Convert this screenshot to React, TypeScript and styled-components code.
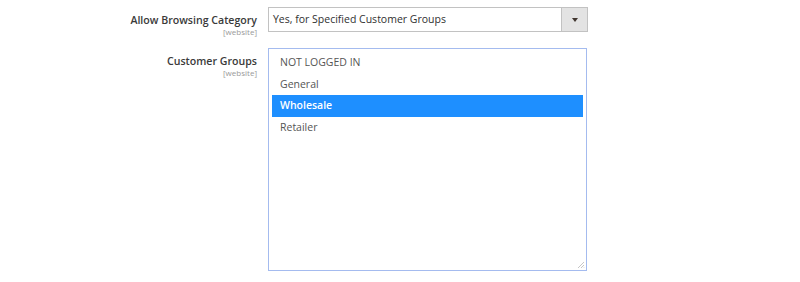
import React, {useState} from 'react';
import styled, {createGlobalStyle} from 'styled-components';

const GlobalStyle = createGlobalStyle`
  body {
    margin: 0;
    background: #fff;
    font-family: "Open Sans", "Liberation Sans", sans-serif;
    color: #303030;
  }
`;

const groups = ['NOT LOGGED IN', 'General', 'Wholesale', 'Retailer'];

export default function App() {
  const [selected, setSelected] = useState('Wholesale');

  return (
      <>
        <GlobalStyle/>
        <Fieldset>
          <Field>
            <Label>
              <span>Allow Browsing Category</span>
              <Scope>[website]</Scope>
            </Label>
            <Select>
              <SelectValue>Yes, for Specified Customer Groups</SelectValue>
              <Arrow/>
            </Select>
          </Field>
          <Field>
            <Label>
              <span>Customer Groups</span>
              <Scope>[website]</Scope>
            </Label>
            <ListBox role="listbox">
              {groups.map(name => (
                  <Option key={name} $active={name === selected} onClick={() => setSelected(name)}>
                    {name}
                  </Option>
              ))}
              <Grip viewBox="0 0 8 8">
                <path d="M7 1 L1 7 M7 4 L4 7 M7 6.5 L6.5 7" stroke="#b8b8b8" strokeWidth="0.8"/>
              </Grip>
            </ListBox>
          </Field>
        </Fieldset>
      </>
  );
}

const Fieldset = styled.div`
  display: flex;
  flex-direction: column;
  gap: 12px;
  padding-top: 7px;
`;

const Field = styled.div`
  display: grid;
  grid-template-columns: 257px 320px;
  column-gap: 11px;
  align-items: start;
`;

const Label = styled.label`
  display: flex;
  flex-direction: column;
  align-items: flex-end;
  padding-top: 6px;
  font-size: 10.6px;
  font-weight: 600;
  line-height: 14px;
  color: #3a3a3a;
`;

const Scope = styled.span`
  font-size: 8px;
  font-weight: 400;
  line-height: 9px;
  color: #999;
`;

const Select = styled.div`
  display: flex;
  height: 25px;
  box-sizing: border-box;
  border: 1px solid #c2c2c2;
  background: #fff;
`;

const SelectValue = styled.div`
  flex: 1;
  padding-left: 4px;
  font-size: 10.5px;
  line-height: 23px;
  color: #303030;
`;

const Arrow = styled.div`
  width: 25px;
  background: #e3e3e3;
  border-left: 1px solid #c2c2c2;
  display: flex;
  align-items: center;
  justify-content: center;

  &::after {
    content: '';
    border-left: 3px solid transparent;
    border-right: 3px solid transparent;
    border-top: 4px solid #41362f;
  }
`;

const ListBox = styled.div`
  position: relative;
  width: 319px;
  height: 223px;
  box-sizing: border-box;
  border: 1px solid #a4bbef;
  padding: 3px;
  background: #fff;
`;

const Option = styled.div<{ $active: boolean }>`
  height: 21.5px;
  padding-left: 8px;
  font-size: 10.5px;
  line-height: 21.5px;
  font-weight: ${p => p.$active ? 600 : 400};
  background: ${p => p.$active ? '#1e8fff' : 'transparent'};
  color: ${p => p.$active ? '#fff' : '#555'};
  cursor: default;
`;

const Grip = styled.svg`
  position: absolute;
  right: 1px;
  bottom: 1px;
  width: 8px;
  height: 8px;
`;
